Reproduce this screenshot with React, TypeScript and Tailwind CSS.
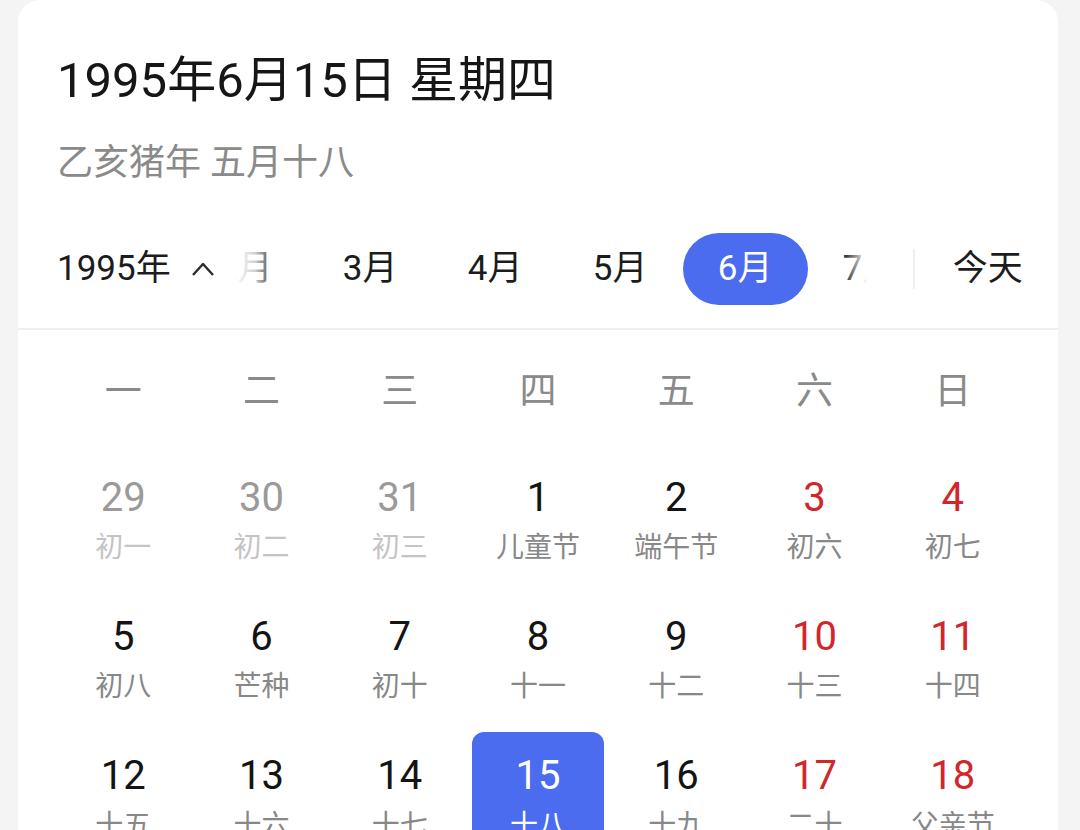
import React from "react";

type Day = { n: number; lunar: string; muted?: boolean; weekend?: boolean; selected?: boolean };

const weekdays = ["一", "二", "三", "四", "五", "六", "日"];

const rows: Day[][] = [
  [
    { n: 29, lunar: "初一", muted: true },
    { n: 30, lunar: "初二", muted: true },
    { n: 31, lunar: "初三", muted: true },
    { n: 1, lunar: "儿童节" },
    { n: 2, lunar: "端午节" },
    { n: 3, lunar: "初六", weekend: true },
    { n: 4, lunar: "初七", weekend: true },
  ],
  [
    { n: 5, lunar: "初八" },
    { n: 6, lunar: "芒种" },
    { n: 7, lunar: "初十" },
    { n: 8, lunar: "十一" },
    { n: 9, lunar: "十二" },
    { n: 10, lunar: "十三", weekend: true },
    { n: 11, lunar: "十四", weekend: true },
  ],
  [
    { n: 12, lunar: "十五" },
    { n: 13, lunar: "十六" },
    { n: 14, lunar: "十七" },
    { n: 15, lunar: "十八", selected: true },
    { n: 16, lunar: "十九" },
    { n: 17, lunar: "二十", weekend: true },
    { n: 18, lunar: "父亲节", weekend: true },
  ],
  [
    { n: 19, lunar: "廿二" },
    { n: 20, lunar: "廿三" },
    { n: 21, lunar: "廿四" },
    { n: 22, lunar: "夏至" },
    { n: 23, lunar: "廿六" },
    { n: 24, lunar: "廿七", weekend: true },
    { n: 25, lunar: "廿八", weekend: true },
  ],
];

const months = ["2月", "3月", "4月", "5月", "6月", "7月"];

function DayCell({ d }: { d: Day }) {
  const numColor = d.selected
    ? "text-white"
    : d.muted
    ? "text-[#9a9a9a]"
    : d.weekend
    ? "text-[#d3262c]"
    : "text-[#141414]";
  const lunarColor = d.selected ? "text-white" : d.muted ? "text-[#c4c4c4]" : "text-[#888888]";
  return (
    <div
      className={`mx-[3px] flex h-[131px] flex-col items-center pt-[20px] rounded-[12px] ${
        d.selected ? "bg-[#4b6cee]" : ""
      }`}
    >
      <div className={`h-[48px] text-[40px] leading-[48px] ${numColor}`}>{d.n}</div>
      <div className={`mt-[8px] h-[36px] whitespace-nowrap text-[28px] leading-[36px] ${lunarColor}`}>{d.lunar}</div>
    </div>
  );
}

export default function App() {
  return (
    <div
      className="h-[830px] w-[1080px] overflow-hidden bg-[#f4f4f4] pl-[18px] pr-[22px]"
      style={{ fontFamily: 'Roboto, "Noto Sans CJK SC", sans-serif' }}
    >
      <div className="min-h-[900px] rounded-t-[22px] bg-white">
        {/* header: date, lunar date, month strip */}
        <div className="border-b-2 border-[#efefef] pl-[39px] pr-[20px] pt-[53px] pb-[23px]">
          <div className="h-[56px] whitespace-nowrap text-[49px] leading-[56px] text-[#161616]">1995年6月15日 星期四</div>
          <div className="mt-[32px] h-[44px] whitespace-nowrap text-[36px] leading-[44px] text-[#8a8a8a]">乙亥猪年 五月十八</div>
          <div className="mt-[48px] flex h-[72px] items-center whitespace-nowrap">
            <div className="shrink-0 text-[35px] text-[#1c1c1c]">1995年</div>
            <svg className="ml-[20px] shrink-0" width="24" height="16" viewBox="0 0 24 16" fill="none">
              <polyline points="2,14 12,3 22,14" stroke="#2a2a2a" strokeWidth="2.4" strokeLinejoin="round" />
            </svg>
            <div className="relative ml-[18px] h-[72px] w-[634px] shrink-0 overflow-hidden">
              <div className="ml-[-50px] flex h-[72px]">
                {months.map((m) => (
                  <div key={m} className="flex h-[72px] w-[125px] shrink-0 items-center justify-center">
                    {m === "6月" ? (
                      <div className="flex h-[72px] w-[125px] items-center justify-center rounded-full bg-[#4b6cee] text-[35px] text-white">
                        {m}
                      </div>
                    ) : (
                      <span className="text-[35px] text-[#1c1c1c]">{m}</span>
                    )}
                  </div>
                ))}
              </div>
              <div className="pointer-events-none absolute inset-y-0 left-0 w-[44px] bg-gradient-to-r from-white via-white/80 to-white/0" />
              <div className="pointer-events-none absolute inset-y-0 right-0 w-[24px] bg-gradient-to-l from-white to-white/0" />
            </div>
            <div className="ml-[46px] h-[40px] w-[2px] shrink-0 bg-[#efefef]" />
            <div className="ml-[38px] shrink-0 text-[35px] text-[#1c1c1c]">今天</div>
          </div>
        </div>

        {/* calendar grid */}
        <div className="mx-[36px]">
          <div className="grid h-[124px] grid-cols-7 items-center">
            {weekdays.map((w) => (
              <div key={w} className="text-center text-[37px] text-[#8a8a8a]">
                {w}
              </div>
            ))}
          </div>
          <div className="grid grid-cols-7 auto-rows-[139px]">
            {rows.flat().map((d, i) => (
              <DayCell key={i} d={d} />
            ))}
          </div>
        </div>
      </div>
    </div>
  );
}
